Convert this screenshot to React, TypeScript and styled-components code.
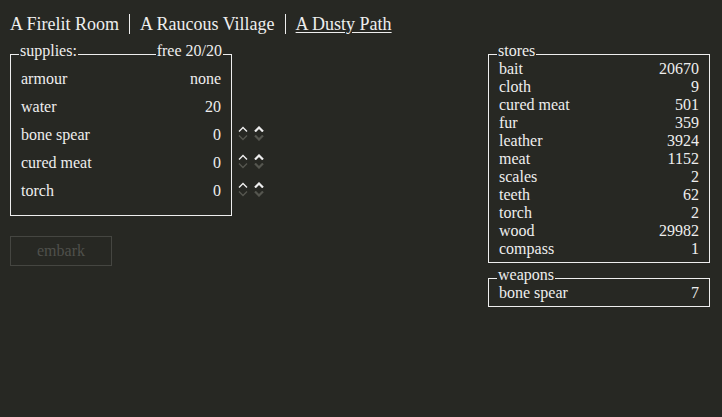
import React from 'react';
import styled, { createGlobalStyle } from 'styled-components';

const GlobalStyle = createGlobalStyle`
  html, body {
    margin: 0;
    padding: 0;
    background-color: #272823;
    font-family: "Liberation Serif", "Times New Roman", serif;
  }
`;

const Page = styled.div`
  background-color: #272823;
  color: #eeeeee;
  font-family: "Liberation Serif", "Times New Roman", serif;
  font-size: 16px;
  min-height: 417px;
  padding: 14px 12px 0 10px;
  box-sizing: border-box;
`;

const Header = styled.div`
  display: flex;
  height: 20px;
`;

const HeaderButton = styled.div<{ $selected?: boolean; $first?: boolean }>`
  font-size: 18px;
  line-height: 20px;
  padding: 0 10px 0 ${(p) => (p.$first ? '0' : '10px')};
  border-left: ${(p) => (p.$first ? 'none' : '1px solid #eeeeee')};
  text-decoration: ${(p) => (p.$selected ? 'underline' : 'none')};
  text-underline-offset: 2px;
  cursor: pointer;
`;

const Content = styled.div`
  display: flex;
  justify-content: space-between;
  align-items: flex-start;
  margin-top: 20px;
`;

const LeftColumn = styled.div`
  display: flex;
  flex-direction: column;
  align-items: flex-start;
`;

const RightColumn = styled.div`
  display: flex;
  flex-direction: column;
  gap: 15px;
`;

const Box = styled.div<{ $bottom: number }>`
  width: 200px;
  border: 1px solid #eeeeee;
  padding: 0 10px ${(p) => p.$bottom}px 10px;
`;

const Legend = styled.div`
  display: flex;
  justify-content: space-between;
  height: 18px;
  line-height: 18px;
  margin: -13px -2px 0 -2px;
`;

const LegendText = styled.span`
  background-color: #272823;
  padding: 0 1px;
`;

const SupplyList = styled.div`
  margin-top: 5px;
`;

const SupplyRow = styled.div`
  display: flex;
  align-items: center;
  height: 28px;
  line-height: 18px;
`;

const Label = styled.span`
  flex: 1;
`;

const Value = styled.span`
  text-align: right;
`;

const Arrows = styled.div`
  display: flex;
  gap: 6px;
  width: 25px;
  margin-left: 17px;
  margin-right: -42px;
  margin-top: -4px;
`;

const ArrowColumn = styled.div`
  display: flex;
  flex-direction: column;
  gap: 3px;
`;

const Chevron = styled.svg`
  display: block;
  width: 10px;
  height: 6px;
`;

const StoreRow = styled.div`
  display: flex;
  line-height: 18px;
  height: 18px;
`;

const EmbarkButton = styled.div`
  margin-top: 20px;
  width: 100px;
  height: 28px;
  line-height: 28px;
  border: 1px solid #454641;
  color: #4f504b;
  text-align: center;
`;

const UpArrow: React.FC<{ bold?: boolean }> = ({ bold }) => (
  <Chevron viewBox="0 0 10 6">
    <polyline
      points="1,5.5 5,1.5 9,5.5"
      fill="none"
      stroke="#eeeeee"
      strokeWidth={bold ? 2.2 : 1.4}
    />
  </Chevron>
);

const DownArrow: React.FC<{ bold?: boolean }> = ({ bold }) => (
  <Chevron viewBox="0 0 10 6">
    <polyline
      points="1,0.5 5,4.5 9,0.5"
      fill="none"
      stroke="#55564f"
      strokeWidth={bold ? 2.2 : 1.4}
    />
  </Chevron>
);

const ArrowGroup: React.FC = () => (
  <Arrows>
    <ArrowColumn>
      <UpArrow />
      <DownArrow />
    </ArrowColumn>
    <ArrowColumn>
      <UpArrow bold />
      <DownArrow bold />
    </ArrowColumn>
  </Arrows>
);

const supplies: { name: string; value: string; arrows: boolean }[] = [
  { name: 'armour', value: 'none', arrows: false },
  { name: 'water', value: '20', arrows: false },
  { name: 'bone spear', value: '0', arrows: true },
  { name: 'cured meat', value: '0', arrows: true },
  { name: 'torch', value: '0', arrows: true },
];

const stores: [string, number][] = [
  ['bait', 20670],
  ['cloth', 9],
  ['cured meat', 501],
  ['fur', 359],
  ['leather', 3924],
  ['meat', 1152],
  ['scales', 2],
  ['teeth', 62],
  ['torch', 2],
  ['wood', 29982],
  ['compass', 1],
];

const weapons: [string, number][] = [['bone spear', 7]];

const App: React.FC = () => (
  <Page>
    <GlobalStyle />
    <Header>
      <HeaderButton $first>A Firelit Room</HeaderButton>
      <HeaderButton>A Raucous Village</HeaderButton>
      <HeaderButton $selected>A Dusty Path</HeaderButton>
    </Header>
    <Content>
      <LeftColumn>
        <Box $bottom={10}>
          <Legend>
            <LegendText>supplies:</LegendText>
            <LegendText>free 20/20</LegendText>
          </Legend>
          <SupplyList>
            {supplies.map((s) => (
              <SupplyRow key={s.name}>
                <Label>{s.name}</Label>
                <Value>{s.value}</Value>
                {s.arrows && <ArrowGroup />}
              </SupplyRow>
            ))}
          </SupplyList>
        </Box>
        <EmbarkButton>embark</EmbarkButton>
      </LeftColumn>
      <RightColumn>
        <Box $bottom={4}>
          <Legend>
            <LegendText>stores</LegendText>
          </Legend>
          {stores.map(([name, count]) => (
            <StoreRow key={name}>
              <Label>{name}</Label>
              <Value>{count}</Value>
            </StoreRow>
          ))}
        </Box>
        <Box $bottom={4}>
          <Legend>
            <LegendText>weapons</LegendText>
          </Legend>
          {weapons.map(([name, count]) => (
            <StoreRow key={name}>
              <Label>{name}</Label>
              <Value>{count}</Value>
            </StoreRow>
          ))}
        </Box>
      </RightColumn>
    </Content>
  </Page>
);

export default App;
